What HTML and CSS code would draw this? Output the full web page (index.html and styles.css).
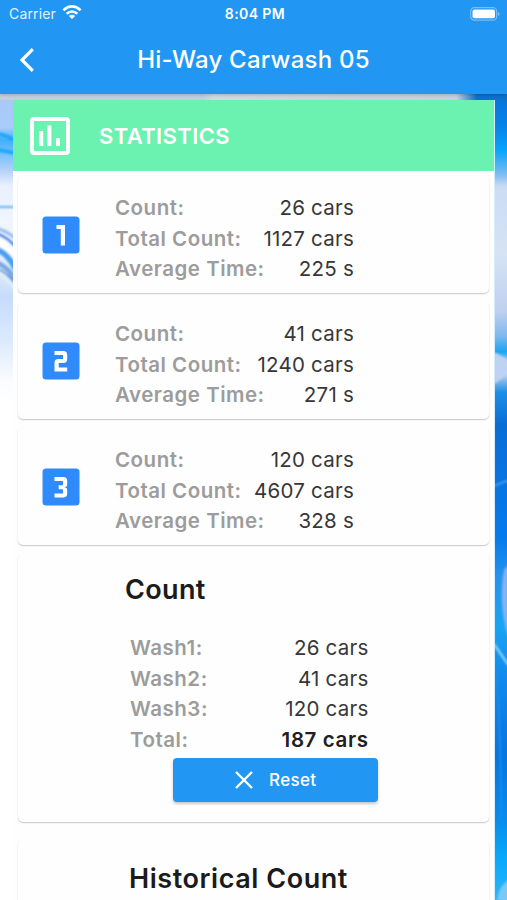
FILE: index.html
```html
<!DOCTYPE html>
<html lang="en">
<head>
<meta charset="utf-8">
<title>Hi-Way Carwash 05</title>
<link rel="stylesheet" href="styles.css">
</head>
<body>
<header class="appbar">
  <div class="status">
    <div class="carrier"><span>Carrier</span>
      <svg width="20" height="15" viewBox="0 0 20 15" fill="none" stroke="#fff" stroke-width="2.5"><path d="M1.4 5.2Q10-2.4 18.6 5.2M4.7 8.8Q10 4.1 15.3 8.8"/><path d="M10 14L6.8 11Q10 8.4 13.2 11Z" fill="#fff" stroke="none"/></svg>
    </div>
    <span class="clock">8:04 PM</span>
    <svg class="battery" width="31" height="14" viewBox="0 0 31 14"><rect x=".7" y=".7" width="26" height="12.4" rx="3.7" fill="none" stroke="#79bef8" stroke-width="1.2"/><rect x="2.5" y="2.5" width="22.5" height="8.8" rx="2" fill="#fff"/><path d="M28.2 4.9Q31 7 28.2 9Z" fill="#8fc8f9"/></svg>
  </div>
  <div class="titlebar">
    <svg class="back" width="18" height="26" viewBox="0 0 18 26" fill="none" stroke="#fff" stroke-width="3.2"><path d="M14.8 2.2L4 13L14.8 23.8"/></svg>
    <h1>Hi-Way Carwash 05</h1>
  </div>
</header>
<main class="page">
  <svg class="wallpaper" width="507" height="806" viewBox="0 94 507 806" preserveAspectRatio="none">
    <defs>
      <linearGradient id="left" x1="0" y1="94" x2="0" y2="400" gradientUnits="userSpaceOnUse">
        <stop offset="0" stop-color="#a9c9f7"/><stop offset=".11" stop-color="#a9ccfa"/><stop offset=".15" stop-color="#42aefc"/><stop offset=".19" stop-color="#6fc0fc"/><stop offset=".25" stop-color="#b4d1fa"/><stop offset=".3" stop-color="#eaf1fd"/><stop offset=".42" stop-color="#f0f5fe"/><stop offset=".56" stop-color="#e4effc"/><stop offset=".66" stop-color="#c5dcfb"/><stop offset=".8" stop-color="#dbe9fd"/><stop offset=".94" stop-color="#fafcff"/><stop offset="1" stop-color="#fff"/>
      </linearGradient>
      <linearGradient id="right" x1="0" y1="94" x2="0" y2="900" gradientUnits="userSpaceOnUse">
        <stop offset="0" stop-color="#0871d8"/><stop offset=".04" stop-color="#0783ea"/><stop offset=".07" stop-color="#06a4fb"/><stop offset=".1" stop-color="#7ebcf3"/><stop offset=".115" stop-color="#cbdcf4"/><stop offset=".2" stop-color="#d6e3f5"/><stop offset=".27" stop-color="#bed0ef"/><stop offset=".3" stop-color="#80b9ef"/><stop offset=".32" stop-color="#18a6f1"/><stop offset=".33" stop-color="#8dc4f2"/><stop offset=".35" stop-color="#a9c8ef"/><stop offset=".37" stop-color="#1c8fe5"/><stop offset=".41" stop-color="#0a6dd6"/><stop offset=".55" stop-color="#067aec"/><stop offset=".6" stop-color="#2593ed"/><stop offset=".66" stop-color="#18a4f3"/><stop offset=".72" stop-color="#138aee"/><stop offset=".82" stop-color="#0874dc"/><stop offset=".9" stop-color="#078cec"/><stop offset=".95" stop-color="#08aafa"/><stop offset="1" stop-color="#2bb6f8"/>
      </linearGradient>
      <linearGradient id="top"><stop offset="0" stop-color="#c4cfdc"/><stop offset=".4" stop-color="#c1cede"/><stop offset=".42" stop-color="#d0d9df"/><stop offset=".9" stop-color="#c6cfdb"/><stop offset=".94" stop-color="#0d70cc"/></linearGradient>
      <filter id="soft" x="-10" y="94" width="530" height="820" filterUnits="userSpaceOnUse"><feGaussianBlur stdDeviation=".8"/></filter>
    </defs>
    <path d="M0 94H253V900H0Z" fill="#fff"/>
    <path d="M0 94H14V400H0Z" fill="url(#left)"/>
    <path d="M490 94H507V900H490Z" fill="url(#right)"/>
    <path d="M0 94H507V100H0Z" fill="url(#top)"/>
    <g fill="none" filter="url(#soft)">
      <path d="M-2 134Q6 135 14 140M-2 150Q6 151 14 153" stroke="#08a4fb" stroke-width="3"/>
      <path d="M-2 207H14" stroke="#5db7f5" stroke-width="2"/>
      <path d="M-2 229Q7 231 16 239" stroke="#91bbed" stroke-width="3"/>
      <path d="M-2 234Q7 237 16 247" stroke="#3473dc" stroke-width="2"/>
      <path d="M-2 241Q7 247 16 258" stroke="#fff" stroke-width="7"/>
      <path d="M-2 250Q7 253 16 269" stroke="#479ff1" stroke-width="6"/>
      <path d="M-2 263Q8 268 16 280" stroke="#7ca9df" stroke-width="5"/>
      <path d="M-2 269Q8 273 16 285" stroke="#3069d2" stroke-width="1.3"/>
      <path d="M-2 274Q7 279 16 290" stroke="#e4f1f5" stroke-width="2"/>
      <path d="M494 352L509 360V374L494 384Z" fill="#bdd3f1"/>
      <path d="M494 486L509 480" stroke="#58a7eb" stroke-width="1.5"/>
      <path d="M504 570Q498 602 508 637V565Z" fill="#84b4ef"/>
      <path d="M494 644L509 666" stroke="#a6e1fb" stroke-width="2"/>
      <path d="M494 660Q501 700 501 820" stroke="#168cf0" stroke-width="2"/>
      <path d="M497 900Q499 885 509 880V902Z" fill="#7bc8f5"/>
    </g>
  </svg>
  <div class="panel">
    <div class="banner">
      <svg width="40" height="38" viewBox="0 0 40 38"><rect x="2" y="2" width="36" height="34" rx="2" fill="none" stroke="#fff" stroke-width="4"/><path d="M9.2 14h4v15h-4zM17.4 8.500h4V29h-4zM26 21h4v8h-4z" fill="#fff"/></svg>
      <h2>STATISTICS</h2>
    </div>
    <section class="card stat">
      <svg class="num" width="38" height="38" viewBox="0 0 38 38"><rect x=".5" y=".5" width="37" height="37" rx="3.500" fill="#2f8bfc"/><path d="M14.500 9H23v20.500h-4.200V13h-4.300Z" fill="#fff"/></svg>
      <dl><div><dt>Count:</dt><dd>26 cars</dd></div><div><dt>Total Count:</dt><dd>1127 cars</dd></div><div><dt>Average Time:</dt><dd>225 s</dd></div></dl>
    </section>
    <section class="card stat">
      <svg class="num" width="38" height="38" viewBox="0 0 38 38"><rect x=".5" y=".5" width="37" height="37" rx="3.500" fill="#2f8bfc"/><path d="M12.500 9h8.700q4 0 4 4v4q0 4-4 4h-4.500v4.500h8.500v4H12.500V21q0-4 4-4H21v-4h-8.500Z" fill="#fff"/></svg>
      <dl><div><dt>Count:</dt><dd>41 cars</dd></div><div><dt>Total Count:</dt><dd>1240 cars</dd></div><div><dt>Average Time:</dt><dd>271 s</dd></div></dl>
    </section>
    <section class="card stat">
      <svg class="num" width="38" height="38" viewBox="0 0 38 38"><rect x=".5" y=".5" width="37" height="37" rx="3.500" fill="#2f8bfc"/><path d="M12.500 9h8.700q4 0 4 4v3.200q0 3-3 3 3 0 3 3v3.300q0 4-4 4h-8.700v-4H21V21.200h-4.300v-4H21V13h-8.500Z" fill="#fff"/></svg>
      <dl><div><dt>Count:</dt><dd>120 cars</dd></div><div><dt>Total Count:</dt><dd>4607 cars</dd></div><div><dt>Average Time:</dt><dd>328 s</dd></div></dl>
    </section>
    <section class="card count">
      <h3>Count</h3>
      <dl><div><dt>Wash1:</dt><dd>26 cars</dd></div><div><dt>Wash2:</dt><dd>41 cars</dd></div><div><dt>Wash3:</dt><dd>120 cars</dd></div><div class="total"><dt>Total:</dt><dd>187 cars</dd></div></dl>
      <button class="reset"><svg width="18" height="18" viewBox="0 0 18 18" fill="none" stroke="#fff" stroke-width="2.400"><path d="M1 1L17 17M17 1L1 17"/></svg><span>Reset</span></button>
    </section>
    <section class="card history"><h3>Historical Count</h3></section>
  </div>
</main>
</body>
</html>
```
FILE: styles.css
```css
* { box-sizing: border-box; }
html, body { margin: 0; height: 900px; overflow: hidden; }
body { font-family: Inter, "Liberation Sans", sans-serif; display: flex; flex-direction: column; background: #fff; }
h1, h2, h3, dl, dd { margin: 0; }
svg { display: block; flex: none; }
.appbar { height: 94px; flex: none; background: #2196f3; color: #fff; z-index: 1; box-shadow: 0 1px 3px rgba(0,0,0,.2); }
.status { height: 27px; display: grid; grid-template-columns: 1fr auto 1fr; align-items: center; padding: 0 6px 0 9px; }
.carrier { display: flex; align-items: center; gap: 6px; font-size: 14px; letter-spacing: .15px; color: #e4f2fd; }
.carrier svg { margin-top: -2px; }
.clock { font-size: 14px; font-weight: 600; letter-spacing: .4px; }
.battery { justify-self: end; }
.titlebar { height: 66px; display: grid; grid-template-columns: 60px 1fr 60px; align-items: center; }
.back { margin-left: 18px; }
h1 { text-align: center; font-size: 24px; line-height: 30px; font-weight: 500; letter-spacing: .24px; white-space: nowrap; }
.page { position: relative; height: 806px; padding: 6px 12px 0 13px; overflow: hidden; }
.wallpaper { position: absolute; inset: 0; }
.panel { position: relative; height: 820px; background: #fefefe; border-right: 1px solid #d5edfc; }
.banner { height: 71px; display: flex; align-items: center; gap: 29px; padding-left: 17px; background: #6bf2b0; color: #fff; }
h2 { font-size: 22px; line-height: 28px; font-weight: 600; letter-spacing: .4px; }
.card { margin: 0 5px 9px; background: #fefefe; border-radius: 5px; box-shadow: 0 1px 1.5px rgba(0,0,0,.22); }
.banner + .card { margin-top: 5px; }
.stat { height: 117px; display: grid; grid-template-columns: 97px 239px; padding-top: 16.8px; }
.num { margin: 23.2px 0 0 24px; }
dl > div { height: 30.5px; display: flex; justify-content: space-between; align-items: center; font-size: 20.5px; line-height: 30px; white-space: nowrap; }
dt { color: #9c9c9c; font-weight: 600; letter-spacing: .5px; }
dd { color: #373737; letter-spacing: .23px; }
.count { height: 268px; padding-top: 18.6px; margin-bottom: 18px; }
h3 { color: #1b1b1b; font-size: 27px; line-height: 34px; font-weight: 600; letter-spacing: .35px; white-space: nowrap; }
.count h3 { margin-left: 107px; }
.count dl { width: 238.5px; margin: 26.2px 0 0 112px; }
.total dd { color: #202020; font-weight: 600; letter-spacing: .6px; }
.reset { width: 205px; height: 44px; margin: 3.2px 0 0 155px; padding: 0 0 0 62px; display: flex; align-items: center; gap: 16px; border: 0; border-radius: 4px; background: #2196f3; color: #fff; font: 500 17px/20px Inter, sans-serif; letter-spacing: .35px; box-shadow: 0 2px 3px rgba(0,0,0,.22); }
.history { height: 150px; padding: 21.700px 0 0 111px; }
.history h3 { letter-spacing: .55px; }
```
